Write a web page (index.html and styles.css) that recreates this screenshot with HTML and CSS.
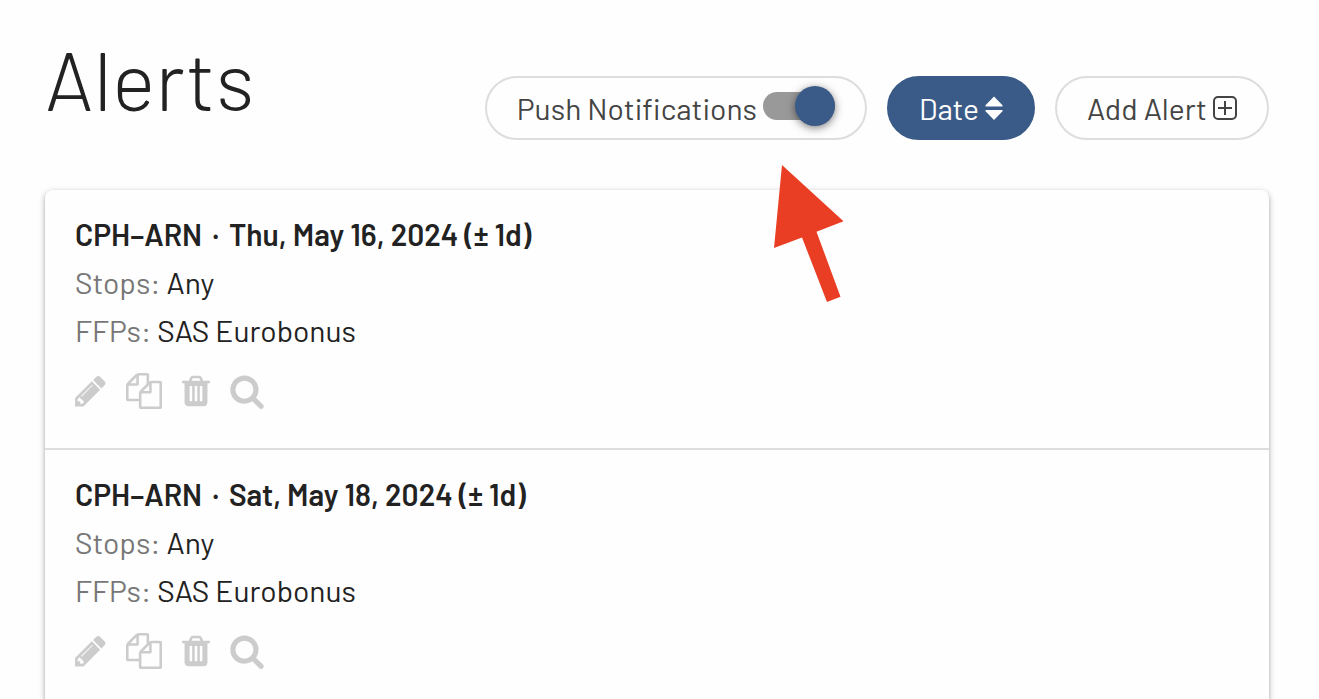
FILE: index.html
```html
<!DOCTYPE html>
<html lang="en">
<head>
<meta charset="utf-8">
<meta name="viewport" content="width=device-width, initial-scale=1">
<title>Alerts</title>
<link rel="stylesheet" href="styles.css">
</head>
<body>
<svg class="sprite" aria-hidden="true">
  <symbol id="pencil" viewBox="128 0 1536 1792"><path d="M491 1536l91-91-235-235-91 91v107h128v128h107zm523-928q0-22-22-22-10 0-17 7l-542 542q-7 7-7 17 0 22 22 22 10 0 17-7l542-542q7-7 7-17zm-54-192l416 416-832 832h-416v-416zm683 96q0 53-37 90l-166 166-416-416 166-165q36-38 90-38 53 0 91 38l235 234q37 39 37 91z"/></symbol>
  <symbol id="files" viewBox="0 0 1792 1792"><path d="M1696 384q40 0 68 28t28 68v1216q0 40-28 68t-68 28h-960q-40 0-68-28t-28-68v-288h-544q-40 0-68-28t-28-68v-672q0-40 20-88t48-76l408-408q28-28 76-48t88-20h416q40 0 68 28t28 68v328q68-40 128-40h416zm-544 213l-299 299h299v-299zm-640-384l-299 299h299v-299zm196 647l316-316v-416h-384v416q0 40-28 68t-68 28h-416v640h512v-256q0-40 20-88t48-76zm956 804v-1152h-384v416q0 40-28 68t-68 28h-416v640h896z"/></symbol>
  <symbol id="trash" viewBox="192 0 1408 1792"><path d="M704 1376v-704q0-14-9-23t-23-9h-64q-14 0-23 9t-9 23v704q0 14 9 23t23 9h64q14 0 23-9t9-23zm256 0v-704q0-14-9-23t-23-9h-64q-14 0-23 9t-9 23v704q0 14 9 23t23 9h64q14 0 23-9t9-23zm256 0v-704q0-14-9-23t-23-9h-64q-14 0-23 9t-9 23v704q0 14 9 23t23 9h64q14 0 23-9t9-23zm-544-992h448l-48-117q-7-9-17-11h-317q-10 2-17 11zm928 32v64q0 14-9 23t-23 9h-96v948q0 83-47 143.5t-113 60.5h-832q-66 0-113-58.5t-47-141.5v-952h-96q-14 0-23-9t-9-23v-64q0-14 9-23t23-9h309l70-167q15-37 54-63t79-26h320q40 0 79 26t54 63l70 167h309q14 0 23 9t9 23z"/></symbol>
  <symbol id="search" viewBox="64 0 1664 1792"><path d="M1216 832q0-185-131.5-316.5t-316.5-131.5-316.5 131.5-131.5 316.5 131.5 316.5 316.5 131.5 316.5-131.5 131.5-316.5zm512 832q0 52-38 90t-90 38q-54 0-90-38l-343-342q-179 124-399 124-143 0-273.5-55.5t-225-150-150-225-55.5-273.5 55.5-273.5 150-225 225-150 273.5-55.5 273.5 55.5 225 150 150 225 55.5 273.5q0 220-124 399l343 343q37 37 37 90z"/></symbol>
</svg>
<main class="page">
  <header class="header">
    <h1 class="title">Alerts</h1>
    <div class="toolbar">
      <label class="pill" for="push">Push Notifications
        <input class="switch" type="checkbox" role="switch" id="push" checked>
      </label>
      <button class="pill pill-primary" type="button">Date
        <svg class="sort-icon" viewBox="0 0 18 24" aria-hidden="true"><path d="M9 0.5L17.5 9.2Q18 10.4 17 10.4H1Q0 10.4 0.5 9.2ZM9 24L17.5 15.3Q18 14 17 14H1Q0 14 0.5 15.3Z"/></svg>
      </button>
      <button class="pill" type="button">Add Alert
        <svg class="plus-icon" viewBox="0 0 24 24" aria-hidden="true"><rect x="1" y="1" width="22" height="22" rx="4"/><path d="M12 5V19M5 12H19"/></svg>
      </button>
    </div>
    <svg class="pointer" viewBox="0 0 72 140" aria-hidden="true"><path d="M9 1L70.500 57.300L43.500 67.700L67.500 132.700L54 138L29 73.500L1 84Z"/></svg>
  </header>
  <section class="card">
    <article class="alert">
      <h2 class="route"><span>CPH–ARN</span><span>·</span><span>Thu, May 16, 2024 (± 1d)</span></h2>
      <p class="detail"><span class="key">Stops:</span> Any</p>
      <p class="detail"><span class="key">FFPs:</span> SAS Eurobonus</p>
      <div class="actions">
        <button class="action" type="button" aria-label="Edit"><svg class="icon pencil"><use href="#pencil"/></svg></button>
        <button class="action" type="button" aria-label="Duplicate"><svg class="icon files"><use href="#files"/></svg></button>
        <button class="action" type="button" aria-label="Delete"><svg class="icon trash"><use href="#trash"/></svg></button>
        <button class="action" type="button" aria-label="Search"><svg class="icon search"><use href="#search"/></svg></button>
      </div>
    </article>
    <article class="alert">
      <h2 class="route"><span>CPH–ARN</span><span>·</span><span>Sat, May 18, 2024 (± 1d)</span></h2>
      <p class="detail"><span class="key">Stops:</span> Any</p>
      <p class="detail"><span class="key">FFPs:</span> SAS Eurobonus</p>
      <div class="actions">
        <button class="action" type="button" aria-label="Edit"><svg class="icon pencil"><use href="#pencil"/></svg></button>
        <button class="action" type="button" aria-label="Duplicate"><svg class="icon files"><use href="#files"/></svg></button>
        <button class="action" type="button" aria-label="Delete"><svg class="icon trash"><use href="#trash"/></svg></button>
        <button class="action" type="button" aria-label="Search"><svg class="icon search"><use href="#search"/></svg></button>
      </div>
    </article>
  </section>
</main>
</body>
</html>
```
FILE: styles.css
```css
* {
  box-sizing: border-box;
}

body {
  margin: 0;
  background: #fefefe;
  color: #222;
  font-family: Barlow, Roboto, "Liberation Sans", sans-serif;
  font-size: 30px;
  line-height: 48px;
}

.sprite {
  display: none;
}

.page {
  padding: 32px 50px 0 45px;
}

.header {
  position: relative;
  display: flex;
  justify-content: space-between;
  align-items: flex-start;
  padding-bottom: 50px;
}

.title {
  margin: 0;
  font-size: 82px;
  font-weight: 300;
  line-height: 92px;
}

.toolbar {
  display: flex;
  gap: 20px;
  padding-top: 44px;
}

.pill {
  display: flex;
  align-items: center;
  gap: 6px;
  height: 64px;
  padding: 0 30px;
  border: 2px solid #ddd;
  border-radius: 32px;
  background: #fefefe;
  color: #444;
  font: inherit;
  white-space: nowrap;
  cursor: pointer;
}

.pill-primary {
  border-color: #3a5b87;
  background: #3a5b87;
  color: #fefefe;
}

.sort-icon {
  width: 18px;
  height: 24px;
  fill: currentColor;
}

.plus-icon {
  width: 24px;
  height: 24px;
  fill: none;
  stroke: currentColor;
  stroke-width: 2;
}

.switch {
  appearance: none;
  display: flex;
  align-items: center;
  justify-content: flex-end;
  width: 72px;
  height: 28px;
  margin: 0 0 4px;
  background: #999;
  border-radius: 14px;
  cursor: pointer;
}

.switch::before {
  content: "";
  flex: none;
  width: 40px;
  height: 40px;
  border-radius: 50%;
  background: #3a5b87;
  box-shadow: 0 2px 8px rgba(0, 0, 0, 0.5);
}

.switch:not(:checked) {
  justify-content: flex-start;
}

.pointer {
  position: absolute;
  top: 132px;
  right: 424px;
  width: 72px;
  height: 140px;
  fill: #e93e24;
  pointer-events: none;
}

.card {
  overflow: clip;
  border-radius: 8px;
  background: #fefefe;
  box-shadow: 0 2px 6px rgba(0, 0, 0, 0.3), 0 2px 2px rgba(0, 0, 0, 0.15);
}

.alert {
  padding: 20px 30px 39px;
  border-bottom: 2px solid #ddd;
}

.route,
.detail {
  margin: 0;
  font-size: 30px;
}

.route {
  display: flex;
  gap: 10px;
  font-weight: 600;
}

.key {
  color: #777;
}

.actions {
  display: flex;
  gap: 20px;
  padding-top: 19px;
}

.action {
  display: flex;
  padding: 0;
  border: 0;
  background: none;
  color: #ccc;
  cursor: pointer;
}

.icon {
  height: 36px;
  fill: currentColor;
}

.pencil {
  width: 31px;
}

.files {
  width: 36px;
}

.trash {
  width: 28px;
}

.search {
  width: 34px;
}
```
